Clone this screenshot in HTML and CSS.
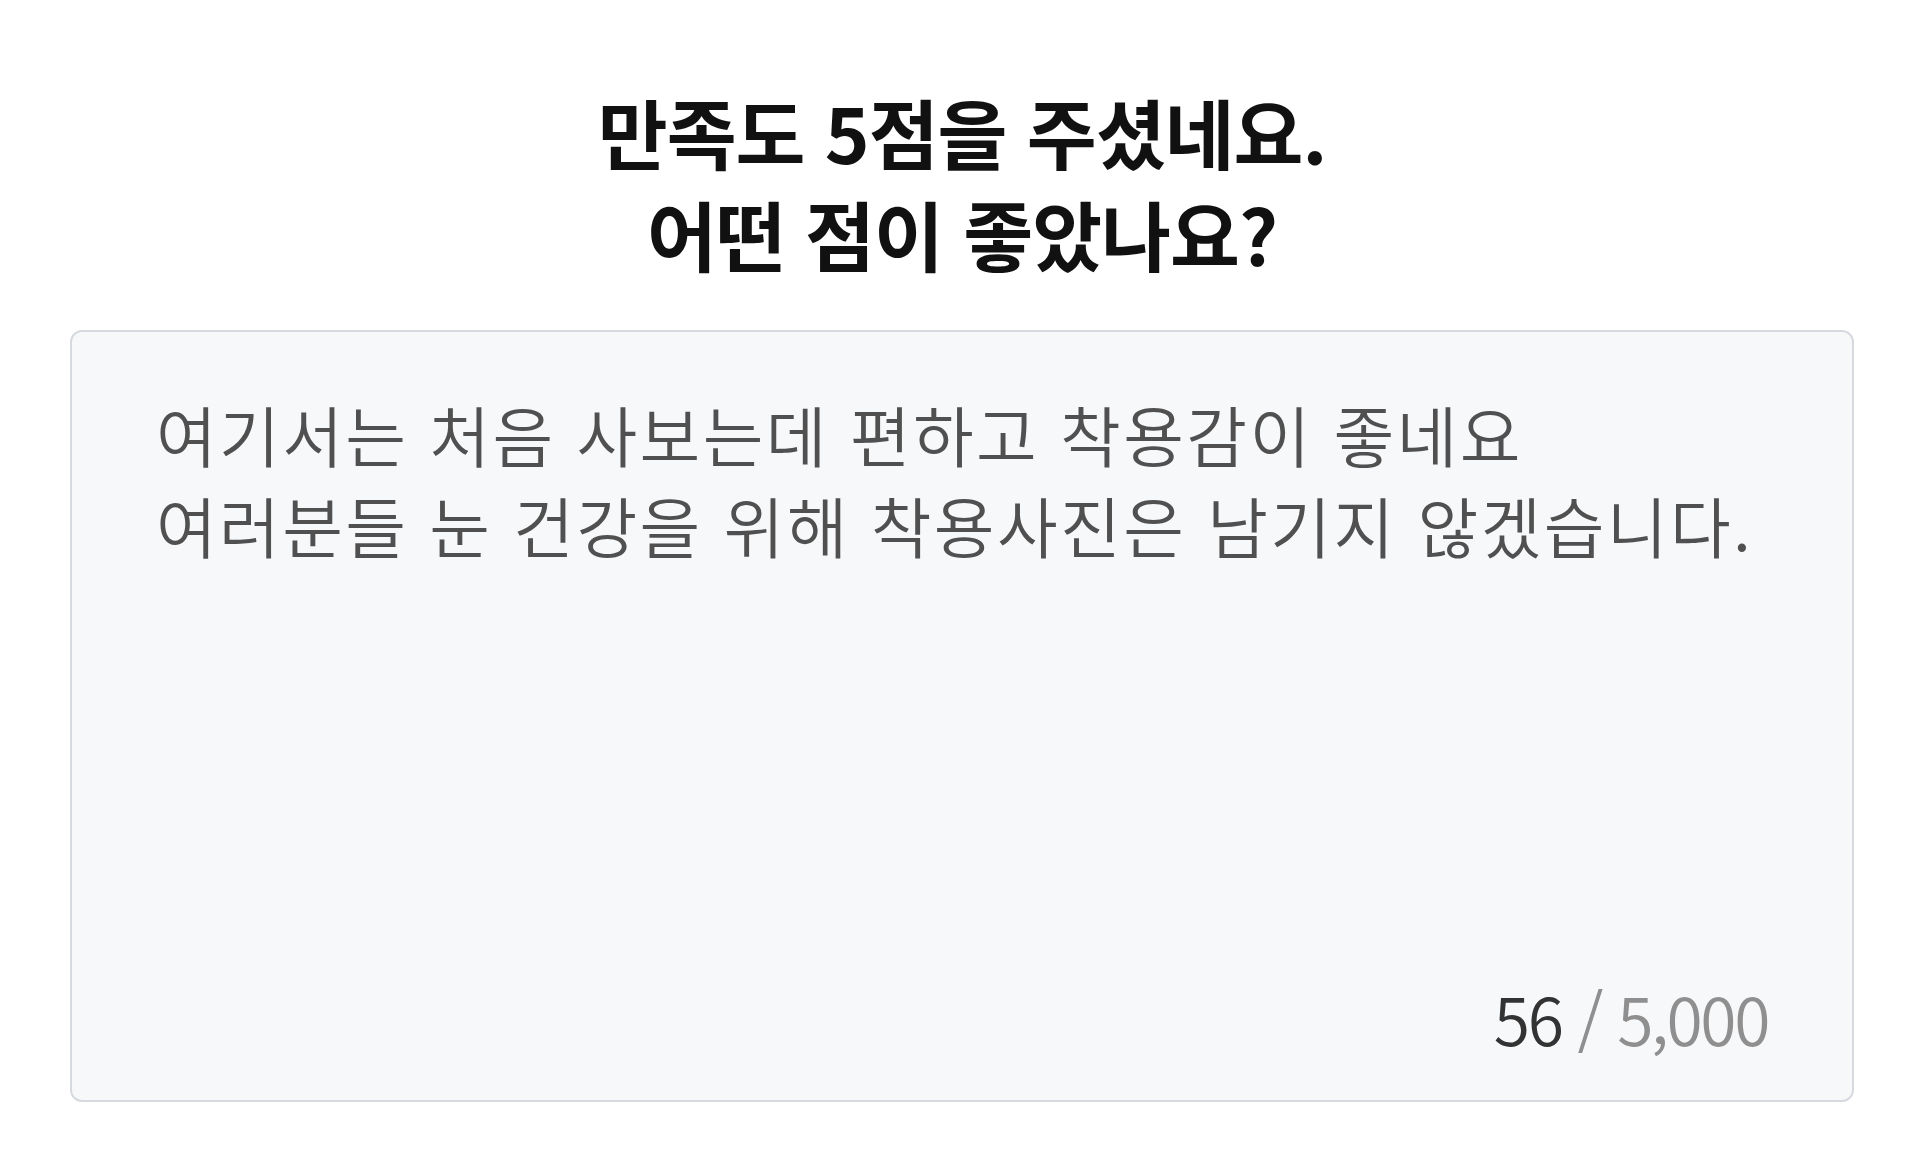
FILE: index.html
```html
<!DOCTYPE html>
<html lang="ko">
<head>
<meta charset="utf-8">
<link rel="stylesheet" href="styles.css">
</head>
<body>
<main class="page">
  <h1 class="title">만족도 5점을 주셨네요.<br>어떤 점이 좋았나요?</h1>
  <section class="review-box">
    <p class="review-text">여기서는 처음 사보는데 편하고 착용감이 좋네요<br>여러분들 눈 건강을 위해 착용사진은 남기지 않겠습니다.</p>
    <div class="counter"><span class="count">56</span><span class="limit"> / 5,000</span></div>
  </section>
</main>
</body>
</html>
```
FILE: styles.css
```css
html, body {
  margin: 0;
  padding: 0;
  background: #ffffff;
}
body {
  font-family: "Noto Sans CJK KR", "Noto Sans", sans-serif;
}
.page {
  display: flex;
  flex-direction: column;
  align-items: center;
  padding: 80px 66px 0 70px;
}
.title {
  margin: 0;
  font-size: 76px;
  line-height: 102px;
  font-weight: 700;
  color: #111111;
  text-align: center;
  letter-spacing: -1px;
}
.review-box {
  box-sizing: border-box;
  margin-top: 46px;
  width: 1784px;
  height: 772px;
  background: #f7f8fa;
  border: 2px solid #d6d9dd;
  border-radius: 12px;
  padding: 56px 84px 37px 84px;
  display: flex;
  flex-direction: column;
}
.review-text {
  margin: 0;
  font-size: 66px;
  line-height: 91px;
  font-weight: 350;
  letter-spacing: 2.4px;
  color: #505050;
}
.counter {
  margin-top: auto;
  text-align: right;
  font-size: 66px;
  line-height: 91px;
  font-weight: 350;
  letter-spacing: -2.4px;
}
.count { color: #333333; }
.limit { color: #8f8f8f; }
```
